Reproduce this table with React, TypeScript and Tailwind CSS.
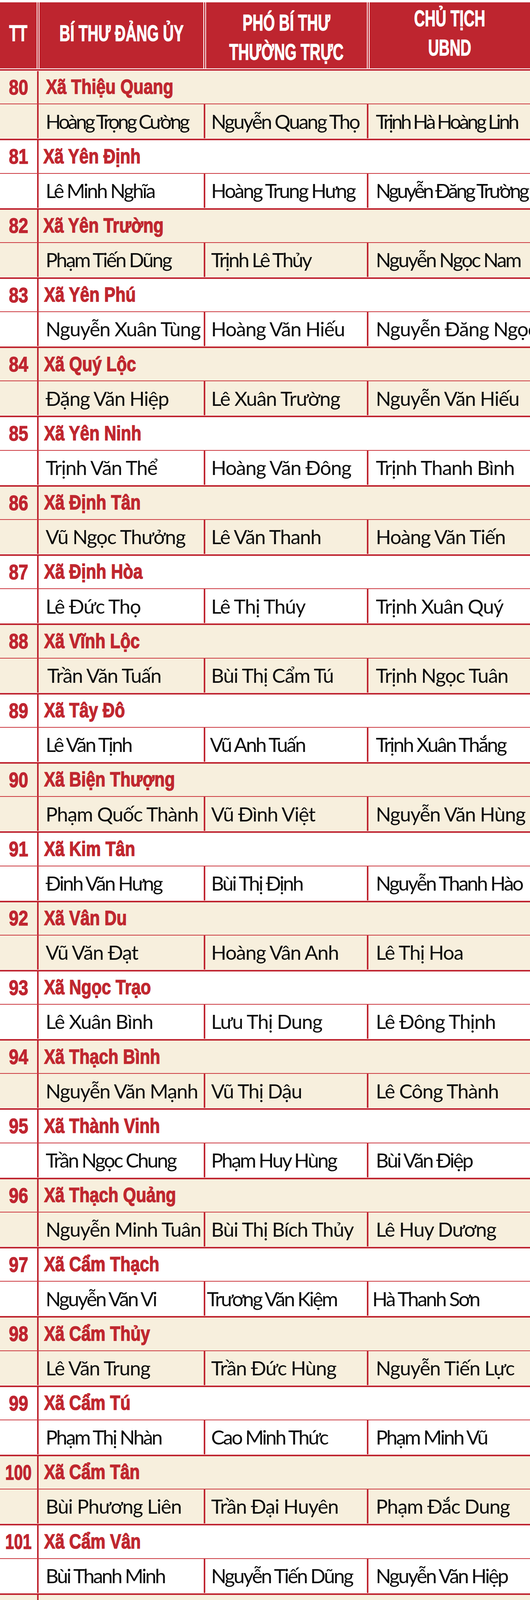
import React from "react";

type Cell = { v: string; pad?: string; fx?: string };
type Row = {
  n: number;
  t: string;
  tp?: string;
  tr?: "d" | "t";
  c: [Cell, Cell, Cell];
};

const c = (v: string, pad?: string, fx?: string): Cell => ({ v, pad, fx });

const TRACK = {
  d: "text-[51px] tracking-[-1.5px]",
  t: "text-[51px] tracking-[-3.5px]",
};
const TIGHT = "text-[51px] tracking-[-5px]";
const SMALL = "text-[44px] tracking-[-3px]";

const rows: Row[] = [
  { n: 80, t: "Xã Thiệu Quang", tp: "pl-[19px]", tr: "t", c: [c("Hoàng Trọng Cường", undefined, TIGHT), c("Nguyễn Quang Thọ"), c("Trịnh Hà Hoàng Linh", undefined, TIGHT)] },
  { n: 81, t: "Xã Yên Định", tp: "pl-[12px]", tr: "t", c: [c("Lê Minh Nghĩa"), c("Hoàng Trung Hưng"), c("Nguyễn Đăng Trường", undefined, TIGHT)] },
  { n: 82, t: "Xã Yên Trường", tp: "pl-[12px]", tr: "t", c: [c("Phạm Tiến Dũng"), c("Trịnh Lê Thủy"), c("Nguyễn Ngọc Nam")] },
  { n: 83, t: "Xã Yên Phú", c: [c("Nguyễn Xuân Tùng"), c("Hoàng Văn Hiếu"), c("Nguyễn Đăng Ngọc")] },
  { n: 84, t: "Xã Quý Lộc", c: [c("Đặng Văn Hiệp"), c("Lê Xuân Trường"), c("Nguyễn Văn Hiếu")] },
  { n: 85, t: "Xã Yên Ninh", c: [c("Trịnh Văn Thể"), c("Hoàng Văn Đông"), c("Trịnh Thanh Bình")] },
  { n: 86, t: "Xã Định Tân", c: [c("Vũ Ngọc Thưởng"), c("Lê Văn Thanh"), c("Hoàng Văn Tiến")] },
  { n: 87, t: "Xã Định Hòa", c: [c("Lê Đức Thọ"), c("Lê Thị Thúy"), c("Trịnh Xuân Quý")] },
  { n: 88, t: "Xã Vĩnh Lộc", c: [c("Trần Văn Tuấn", "pl-[22px]"), c("Bùi Thị Cẩm Tú"), c("Trịnh Ngọc Tuân")] },
  { n: 89, t: "Xã Tây Đô", tr: "t", c: [c("Lê Văn Tịnh"), c("Vũ Anh Tuấn", "pl-[12px]"), c("Trịnh Xuân Thắng")] },
  { n: 90, t: "Xã Biện Thượng", c: [c("Phạm Quốc Thành"), c("Vũ Đình Việt"), c("Nguyễn Văn Hùng")] },
  { n: 91, t: "Xã Kim Tân", tr: "t", c: [c("Đinh Văn Hưng"), c("Bùi Thị Định"), c("Nguyễn Thanh Hào")] },
  { n: 92, t: "Xã Vân Du", c: [c("Vũ Văn Đạt"), c("Hoàng Vân Anh"), c("Lê Thị Hoa")] },
  { n: 93, t: "Xã Ngọc Trạo", c: [c("Lê Xuân Bình"), c("Lưu Thị Dung"), c("Lê Đông Thịnh")] },
  { n: 94, t: "Xã Thạch Bình", c: [c("Nguyễn Văn Mạnh"), c("Vũ Thị Dậu"), c("Lê Công Thành")] },
  { n: 95, t: "Xã Thành Vinh", tr: "t", c: [c("Trần Ngọc Chung"), c("Phạm Huy Hùng"), c("Bùi Văn Điệp")] },
  { n: 96, t: "Xã Thạch Quảng", c: [c("Nguyễn Minh Tuân"), c("Bùi Thị Bích Thủy"), c("Lê Huy Dương")] },
  { n: 97, t: "Xã Cẩm Thạch", tr: "t", c: [c("Nguyễn Văn Vi"), c("Trương Văn Kiệm", "pl-[4px]"), c("Hà Thanh Sơn", "pl-[10px]")] },
  { n: 98, t: "Xã Cẩm Thủy", c: [c("Lê Văn Trung"), c("Trần Đức Hùng"), c("Nguyễn Tiến Lực")] },
  { n: 99, t: "Xã Cẩm Tú", tr: "t", c: [c("Phạm Thị Nhàn"), c("Cao Minh Thức"), c("Phạm Minh Vũ")] },
  { n: 100, t: "Xã Cẩm Tân", c: [c("Bùi Phương Liên"), c("Trần Đại Huyên"), c("Phạm Đắc Dung")] },
  { n: 101, t: "Xã Cẩm Vân", tr: "t", c: [c("Bùi Thanh Minh"), c("Nguyễn Tiến Dũng"), c("Nguyễn Văn Hiệp")] },
  { n: 102, t: "Xã Như Thanh", c: [c("Nguyễn Tiến Dũng"), c("Lê Thúy Lan"), c("Hàn Văn Huyên")] },
  { n: 103, t: "Xã Xuân Du", tr: "t", c: [c("Vũ Hữu Tuấn"), c("Nguyễn Ngọc Lương", undefined, TIGHT), c("Lương Hồng Sỹ")] },
  { n: 104, t: "Xã Yên Thọ", c: [c("Đặng Tiến Dũng"), c("Lê Thị Giang"), c("Đỗ Thanh Minh")] },
  { n: 105, t: "Xã Mậu Lâm", c: [c("Lê Văn Cường"), c("Lê Thị Nhung"), c("Hoàng Văn Thủy")] },
  { n: 106, t: "Xã Xuân Thái", c: [c("Quách Thị Oanh"), c("Trần Tiến Hưng"), c("Lê Huy Chung")] },
  { n: 107, t: "Xã Thanh Kỳ", tr: "t", c: [c("Lê Văn Nghĩa"), c("Phạm Văn Cường"), c("Đặng Hồng Sơn")] },
  { n: 108, t: "Xã Như Xuân", c: [c("Lương Thị Hoa", "pl-[27px]"), c("Nguyễn Văn Dũng"), c("Nguyễn Quang Trường", "pl-[13px]", SMALL)] },
  { n: 109, t: "Xã Thượng Ninh", tr: "t", c: [c("Nguyễn Hữu Tuất"), c("Vi Thị Phượng"), c("Lê Đức Tuấn")] },
  { n: 110, t: "Xã Xuân Bình", c: [c("Mai Công Hoàng"), c("Lê Văn Hiếu"), c("Phạm Văn Tuấn")] },
  { n: 111, t: "Xã Thanh Quân", c: [c("Lê Văn Thuận"), c("Lò Văn Sức"), c("Lê Tiến Đạt")] },
  { n: 112, t: "Xã Thanh Phong", c: [c("Nguyễn Đức Đồng"), c("Vi Thanh Hương"), c("Đinh Văn Phương")] },
  { n: 113, t: "Xã Hóa Quỳ", tp: "pl-[33px]", tr: "t", c: [c("Lê Thị Tĩnh"), c("Dương Văn Mến"), c("Đỗ Tất Hùng")] },
  { n: 114, t: "Xã Thường Xuân", tr: "t", c: [c("Nguyễn Thành Lương", undefined, TIGHT), c("Cầm Bá Nguyên", "pl-[11px]"), c("Hoàng Sỹ Hùng")] },
  { n: 115, t: "Xã Luận Thành", tp: "pl-[5px]", tr: "t", c: [c("Cầm Bá Lâm"), c("Trịnh Thị Vân Anh"), c("Ngô Văn Tường")] },
  { n: 116, t: "Xã Tân Thành", tp: "pl-[35px]", tr: "t", c: [c("Lôi Quang Vũ"), c("Lục Đăng Hỏa"), c("Lê Hoàng Cường")] },
  { n: 117, t: "Xã Thắng Lộc", tp: "pl-[51px]", tr: "t", c: [c("Vi Ngọc Tuấn"), c("Cầm Bá Quyền"), c("Lê Văn Hùng")] },
  { n: 118, t: "Xã Xuân Chinh", tp: "pl-[5px]", tr: "t", c: [c("Trần Quốc Tuấn"), c("Hoàng Văn Giang"), c("Đỗ Đình Minh")] },
  { n: 119, t: "Xã Vạn Xuân", tp: "pl-[48px]", tr: "t", c: [c("Cầm Thị Phượng"), c("Lê Anh Tuấn"), c("Vũ Thị Thu Phương")] },
  { n: 120, t: "Xã Lương Sơn", tp: "pl-[48px]", tr: "t", c: [c("Nguyễn Minh Cảnh"), c("Hà Thị Nguyệt"), c("Nguyễn Xuân Đồng")] },
];

const BOLD = "font-['Liberation_Sans',Arial,sans-serif] font-bold";
const NAME = "font-['Lato','Open_Sans',sans-serif]";
const COL_PAD = ["pl-[18px]", "pl-[15px]", "pl-[19px]"];
const COL_W = ["w-[423px]", "w-[414px]", "flex-1"];

function NameCell({ cell, idx, tr }: { cell: Cell; idx: number; tr: "d" | "t" }) {
  return (
    <div
      className={`${COL_W[idx]} ${cell.pad ?? COL_PAD[idx]} flex items-center overflow-hidden whitespace-nowrap`}
    >
      <span className={`${NAME} ${cell.fx ?? TRACK[tr]} leading-normal text-[#0d0d0d]`}>
        {cell.v}
      </span>
    </div>
  );
}

function Block({ row, shaded }: { row: Row; shaded: boolean }) {
  const tr = row.tr ?? "d";
  return (
    <div className={shaded ? "bg-[#f7efdd]" : "bg-white"}>
      <div className="flex h-[83.3px]">
        <div className="flex w-[95px] items-center justify-center">
          <span
            className={`${BOLD} inline-block text-[53px] leading-normal text-[#bf2530] [-webkit-text-stroke:1.6px_#bf2530] ${
              row.n >= 100 ? "scale-x-[0.76]" : "scale-x-[0.84]"
            }`}
          >
            {row.n}
          </span>
        </div>
        <div className="w-[4px] bg-[#bf2530]" />
        <div className={`flex flex-1 items-center ${row.tp ?? "pl-[14px]"}`}>
          <span
            className={`${BOLD} inline-block origin-left scale-x-[0.84] whitespace-nowrap text-[51px] leading-normal text-[#c0272f] [-webkit-text-stroke:1.6px_#c0272f]`}
          >
            {row.t}
          </span>
        </div>
      </div>
      <div className="h-[2px] bg-[#cc3a41]" />
      <div className="flex h-[87px]">
        <div className="w-[95px]" />
        <div className="w-[4px] bg-[#bf2530]" />
        <NameCell cell={row.c[0]} idx={0} tr={tr} />
        <div className="w-[4px] bg-[#bf2530]" />
        <NameCell cell={row.c[1]} idx={1} tr={tr} />
        <div className="w-[4px] bg-[#bf2530]" />
        <NameCell cell={row.c[2]} idx={2} tr={tr} />
      </div>
      <div className="h-[1px] bg-white" />
      <div className="h-[4px] bg-[#bf2530]" />
    </div>
  );
}

function Header() {
  const divider = <div className="w-[7px] border-x-2 border-white" />;
  const label = "inline-block scale-x-[0.67] whitespace-nowrap [-webkit-text-stroke:1.4px_#ffffff]";
  return (
    <div className="bg-white pt-[6px]">
      <div
        className={`${BOLD} flex h-[169px] bg-[#be252f] text-center text-[57px] leading-[75px] text-white`}
      >
        <div className="flex w-[94px] items-center justify-center pb-[11px]">
          <span className={label}>TT</span>
        </div>
        {divider}
        <div className="flex w-[420px] items-center justify-center pb-[11px]">
          <span className={label}>BÍ THƯ ĐẢNG ỦY</span>
        </div>
        {divider}
        <div className="flex w-[412px] items-center justify-center pt-[10px]">
          <span className={label}>
            PHÓ BÍ THƯ
            <br />
            THƯỜNG TRỰC
          </span>
        </div>
        {divider}
        <div className="flex flex-1 items-center justify-center pb-[11px]">
          <span className={label}>
            CHỦ TỊCH
            <br />
            UBND
          </span>
        </div>
      </div>
      <div className="h-[2px] bg-white" />
      <div className="h-[4px] bg-[#be252f]" />
      <div className="h-[1px] bg-white" />
    </div>
  );
}

export default function App() {
  return (
    <div className="w-[1358px] overflow-hidden bg-white">
      <Header />
      {rows.map((row, i) => (
        <Block key={row.n} row={row} shaded={i % 2 === 0} />
      ))}
    </div>
  );
}
